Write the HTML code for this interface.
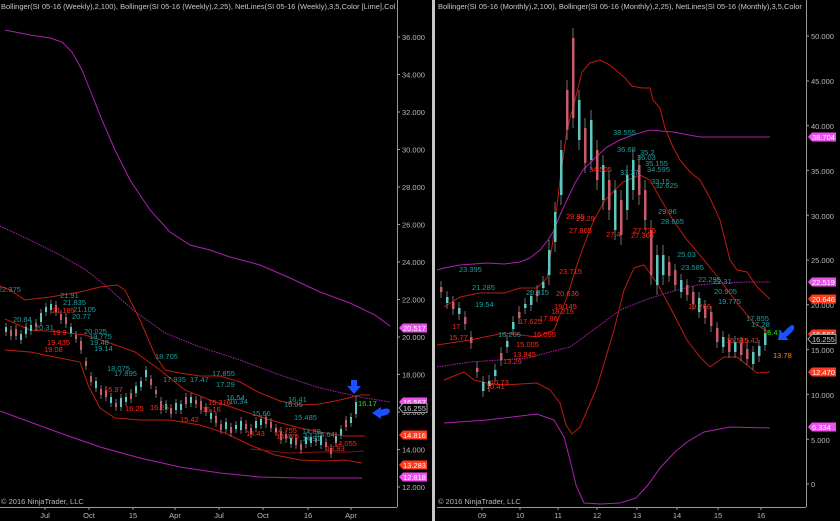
<!DOCTYPE html>
<html><head><meta charset="utf-8"><style>
html,body{margin:0;padding:0;background:#000;width:840px;height:521px;overflow:hidden}
svg{display:block}
text{font-family:"Liberation Sans",Arial,sans-serif}
.ax{font-size:7.5px;fill:#b8b8b8}
.h{font-size:7.5px;fill:#c8c8c8}
.t{font-size:7.5px;fill:#1f9e9e}
.r{font-size:7.5px;fill:#ff2a18}
.g{font-size:7.5px;fill:#22e022}
.o{font-size:7.5px;fill:#ff8c00}
.bx{font-size:7.5px;fill:#fff}
</style></head><body>
<svg width="840" height="521" viewBox="0 0 840 521" xmlns="http://www.w3.org/2000/svg">
<rect width="840" height="521" fill="#000"/>
<rect x="432" y="0" width="3" height="521" fill="#c8c8c8"/>
<line x1="397.5" y1="12" x2="397.5" y2="507" stroke="#9a9a9a"/>
<line x1="0" y1="507.5" x2="397" y2="507.5" stroke="#9a9a9a"/>
<line x1="806.5" y1="12" x2="806.5" y2="507" stroke="#9a9a9a"/>
<line x1="437" y1="507.5" x2="806" y2="507.5" stroke="#9a9a9a"/>

<text class="h" x="1" y="9">Bollinger(SI 05-16 (Weekly),2,100), Bollinger(SI 05-16 (Weekly),2,25), NetLines(SI 05-16 (Weekly),3,5,Color [Lime],Col</text>
<text class="h" x="438" y="9">Bollinger(SI 05-16 (Monthly),2,100), Bollinger(SI 05-16 (Monthly),2,25), NetLines(SI 05-16 (Monthly),3,5,Color</text>
<rect x="397" y="0" width="35" height="12" fill="#000"/>
<rect x="806" y="0" width="34" height="12" fill="#000"/>
<line x1="397.5" y1="0" x2="397.5" y2="12" stroke="#9a9a9a"/>
<line x1="806.5" y1="0" x2="806.5" y2="12" stroke="#9a9a9a"/>

<!-- ticks -->
<path stroke="#9a9a9a" fill="none" d="M397 37h3M397 74.5h3M397 112h3M397 149.5h3M397 187h3M397 224.5h3M397 262h3M397 299.5h3M397 337h3M397 374.5h3M397 412h3M397 449.5h3M397 487h3
M806 36h3M806 81h3M806 125.6h3M806 170.4h3M806 215.2h3M806 260h3M806 304.8h3M806 349.6h3M806 394.4h3M806 439.2h3M806 484h3
M45 507v3M89 507v3M133 507v3M175 507v3M219 507v3M263 507v3M308 507v3M351 507v3M482 507v3M520 507v3M558 507v3M597 507v3M637 507v3M677 507v3M718 507v3M761 507v3"/>

<!-- left panel lines -->
<g fill="none" stroke-width="1">
<polyline stroke="#b020b0" points="5,30 30,35 50,38 62,42 72,52 82,70 92,95 102,120 115,150 130,180 150,210 170,232 190,245 210,250 230,257 260,265 290,278 320,292 350,303 375,315 390,326"/>
<polyline stroke="#b020b0" stroke-dasharray="1.5,1" points="0,226 30,240 60,255 86,270 105,285 133,310 165,333 200,347 240,360 280,375 320,388 360,397 390,402"/>
<polyline stroke="#b020b0" points="0,411 30,422 60,433 100,447 140,458 180,467 220,473 260,477 300,478 330,478 362,478"/>
<polyline stroke="#c01a10" points="0,286 10,290 25,300 50,297 80,292 100,287 117,285 125,290 140,320 155,355 165,370 180,373 200,376 220,376 240,382 260,393 280,401 300,405 320,404 340,400 360,395 370,395"/>
<polyline stroke="#c01a10" points="5,319 30,330 60,332 85,335 110,343 135,352 160,370 185,390 210,400 240,410 270,420 300,428 325,433 345,436 365,436"/>
<polyline stroke="#c01a10" points="5,350 30,352 60,358 80,362 88,385 100,408 115,418 140,420 170,420 200,425 225,433 250,445 275,455 300,460 325,461 345,460 362,463"/>
<polyline stroke="#8a1008" points="250,449 290,453 320,452 350,452 364,451"/>
</g>

<!-- right panel lines -->
<g fill="none" stroke-width="1">
<polyline stroke="#b020b0" points="437,270 444,268 460,265 487,263 504,264 520,262 530,258 540,250 548,240 553,232 560,215 567,200 575,183 583,170 595,158 607,147 620,140 633,135 650,130 673,132 700,137 730,137 770,137"/>
<polyline stroke="#b020b0" stroke-dasharray="1.5,1" points="437,367 470,362 500,360 527,358 550,352 570,347 600,325 620,310 645,300 670,292 697,285 720,283 745,282 770,282"/>
<polyline stroke="#b020b0" points="444,423 487,420 537,414 554,420 564,437 570,460 576,485 584,503 600,504 620,503 636,498 648,485 660,468 675,452 687,442 704,432 730,427 770,428"/>
<polyline stroke="#c01a10" points="444,307 460,297 480,293 504,293 520,288 537,288 547,278 553,240 560,180 567,130 575,100 582,72 590,63 600,60 610,65 625,78 632,86 642,88 650,88 653,100 660,108 665,128 672,145 680,160 690,172 700,180 710,198 720,220 730,260 737,270 747,272 757,287 770,299"/>
<polyline stroke="#c01a10" points="437,345 470,340 504,333 537,337 554,330 567,297 577,265 584,245 594,220 605,200 623,182 640,175 650,180 660,198 673,220 687,240 704,260 720,280 737,303 754,323 770,333"/>
<polyline stroke="#c01a10" points="444,380 464,372 474,380 487,383 504,385 537,383 550,390 560,403 566,425 572,434 580,427 597,387 614,330 624,290 634,268 644,265 657,283 670,307 687,340 700,357 710,367 724,357 737,357 757,373 770,372"/>
</g>

<!-- left candles -->
<path fill="none" stroke="#8a8a8a" stroke-width="0.8" d="M6 323V336M11 326V340M16 325V340M21 330V344M26 323V338M31 321V335M36 319V331M41 309V326M46 303V316M51 300V314M56 301V316M61 310V324M66 313V328M71 323V337M76 331V343M81 337V354M86 357V370M91 372V386M96 377V392M101 385V399M106 386V401M111 393V407M116 399V411M121 394V411M126 393V406M131 389V403M136 382V397M141 377V391M146 366V381M151 375V389M156 386V398M161 397V414M166 400V413M171 404V418M176 399V414M181 400V414M186 393V408M191 393V407M196 396V408M201 397V414M206 403V416M211 409V423M216 412V427M221 420V434M226 418V433M231 423V437M236 421V433M241 417V434M246 420V433M251 424V438M256 417V432M261 415V429M266 413V428M271 418V432M276 424V436M281 427V444M286 430V443M291 434V448M296 434V449M301 440V454M306 433V448M311 433V447M316 434V446M321 432V449M326 438V451M331 444V458M336 432V447M341 425V439M346 416V431M351 413V427M356 396V418"/>
<path fill="#5ec8c0" d="M5 327h2v5h-2zM20 334h2v6h-2zM25 327h2v7h-2zM30 325h2v6h-2zM40 313h2v9h-2zM45 307h2v5h-2zM50 304h2v6h-2zM70 327h2v6h-2zM95 381h2v7h-2zM110 397h2v6h-2zM120 398h2v9h-2zM125 397h2v5h-2zM135 386h2v7h-2zM140 381h2v6h-2zM145 370h2v7h-2zM165 404h2v5h-2zM175 403h2v7h-2zM180 404h2v6h-2zM190 397h2v6h-2zM210 413h2v6h-2zM225 422h2v7h-2zM235 425h2v4h-2zM240 421h2v9h-2zM255 421h2v7h-2zM260 419h2v6h-2zM275 428h2v4h-2zM290 438h2v6h-2zM305 437h2v7h-2zM310 437h2v6h-2zM320 436h2v9h-2zM335 436h2v7h-2zM340 429h2v6h-2zM350 417h2v6h-2zM355 402h2v12h-2z"/>
<path fill="#c85a6a" d="M10 330h2v6h-2zM15 329h2v7h-2zM35 323h2v4h-2zM55 305h2v7h-2zM60 314h2v6h-2zM65 317h2v7h-2zM75 335h2v4h-2zM80 341h2v9h-2zM85 361h2v5h-2zM90 376h2v6h-2zM100 389h2v6h-2zM105 390h2v7h-2zM115 403h2v4h-2zM130 393h2v6h-2zM150 379h2v6h-2zM155 390h2v4h-2zM160 401h2v9h-2zM170 408h2v6h-2zM185 397h2v7h-2zM195 400h2v4h-2zM200 401h2v9h-2zM205 407h2v5h-2zM215 416h2v7h-2zM220 424h2v6h-2zM230 427h2v6h-2zM245 424h2v5h-2zM250 428h2v6h-2zM265 417h2v7h-2zM270 422h2v6h-2zM280 431h2v9h-2zM285 434h2v5h-2zM295 438h2v7h-2zM300 444h2v6h-2zM315 438h2v4h-2zM325 442h2v5h-2zM330 448h2v6h-2zM345 420h2v7h-2z"/>

<!-- right candles -->
<path fill="none" stroke="#8a8a8a" stroke-width="0.8" d="M441 281V298M447 291V309M453 296V315M459 302V320M465 311V330M471 331V349M477 362V378M483 376V397M489 375V392M495 364V382M501 347V366M507 335V353M513 316V335M519 306V324M525 298V314M531 290V311M537 285V302M543 276V294M549 240V285M555 202V252M561 140V205M567 80V140M573 28V128M579 90V150M585 118V173M591 110V170M597 140V190M603 155V210M609 170V220M615 180V240M621 190V245M627 165V220M633 150V200M639 155V205M645 180V230M651 220V285M657 245V295M663 245V285M669 256V282M675 264V291M681 274V298M687 279V301M693 286V310M699 292V318M705 300V324M711 306V332M717 322V348M723 331V353M729 334V358M735 336V358M741 337V361M747 343V365M753 346V370M759 340V362M765 327V351"/>
<path fill="#5ec8c0" d="M446 297h2.5v6h-2.5zM458 308h2.5v6h-2.5zM482 382h2.5v9h-2.5zM488 381h2.5v5h-2.5zM494 370h2.5v6h-2.5zM506 341h2.5v6h-2.5zM512 322h2.5v7h-2.5zM524 304h2.5v4h-2.5zM530 296h2.5v9h-2.5zM542 282h2.5v6h-2.5zM548 250h2.5v25h-2.5zM554 212h2.5v30h-2.5zM560 150h2.5v45h-2.5zM578 100h2.5v40h-2.5zM590 120h2.5v40h-2.5zM602 165h2.5v35h-2.5zM614 190h2.5v40h-2.5zM626 175h2.5v35h-2.5zM632 160h2.5v30h-2.5zM656 255h2.5v30h-2.5zM662 255h2.5v20h-2.5zM680 280h2.5v12h-2.5zM698 298h2.5v14h-2.5zM722 337h2.5v10h-2.5zM734 342h2.5v10h-2.5zM752 352h2.5v12h-2.5zM758 346h2.5v10h-2.5zM764 333h2.5v12h-2.5z"/>
<path fill="#c85a6a" d="M440 287h2.5v5h-2.5zM452 302h2.5v7h-2.5zM464 317h2.5v7h-2.5zM470 337h2.5v6h-2.5zM476 368h2.5v4h-2.5zM500 353h2.5v7h-2.5zM518 312h2.5v6h-2.5zM536 291h2.5v5h-2.5zM566 90h2.5v40h-2.5zM572 38h2.5v80h-2.5zM584 128h2.5v35h-2.5zM596 150h2.5v30h-2.5zM608 180h2.5v30h-2.5zM620 200h2.5v35h-2.5zM638 165h2.5v30h-2.5zM644 190h2.5v30h-2.5zM650 230h2.5v45h-2.5zM668 262h2.5v14h-2.5zM674 270h2.5v15h-2.5zM686 285h2.5v10h-2.5zM692 292h2.5v12h-2.5zM704 306h2.5v12h-2.5zM710 312h2.5v14h-2.5zM716 328h2.5v14h-2.5zM728 340h2.5v12h-2.5zM740 343h2.5v12h-2.5zM746 349h2.5v10h-2.5z"/>

<g>
<text class="t" x="-2" y="292">22.375</text>
<text class="t" x="60" y="298">21.91</text>
<text class="t" x="63" y="305">21.835</text>
<text class="t" x="73" y="312">21.105</text>
<text class="t" x="72" y="319">20.77</text>
<text class="t" x="13" y="322">20.84</text>
<text class="t" x="35" y="330">20.31</text>
<text class="t" x="84" y="334">20.025</text>
<text class="t" x="89" y="339">19.775</text>
<text class="t" x="90" y="345">19.48</text>
<text class="t" x="94" y="351">19.14</text>
<text class="t" x="155" y="359">18.705</text>
<text class="t" x="107" y="371">18.075</text>
<text class="t" x="114" y="376">17.895</text>
<text class="t" x="163" y="382">17.935</text>
<text class="t" x="212" y="376">17.855</text>
<text class="t" x="190" y="382">17.47</text>
<text class="t" x="216" y="387">17.29</text>
<text class="t" x="226" y="400">16.54</text>
<text class="t" x="229" y="404">16.34</text>
<text class="t" x="252" y="416">15.66</text>
<text class="t" x="288" y="402">16.41</text>
<text class="t" x="284" y="407">16.05</text>
<text class="t" x="294" y="420">15.485</text>
<text class="t" x="302" y="434">14.89</text>
<text class="t" x="302" y="441">14.91</text>
<text class="t" x="316" y="437">14.64</text>
<text class="r" x="52" y="313">21.185</text>
<text class="r" x="52" y="335">19.9</text>
<text class="r" x="47" y="345">19.435</text>
<text class="r" x="44" y="352">19.08</text>
<text class="r" x="104" y="392">16.97</text>
<text class="r" x="125" y="411">16.25</text>
<text class="r" x="150" y="410">16.25</text>
<text class="r" x="208" y="405">16.316</text>
<text class="r" x="202" y="412">16.16</text>
<text class="r" x="180" y="422">15.42</text>
<text class="r" x="246" y="436">14.43</text>
<text class="r" x="274" y="433">14.755</text>
<text class="r" x="276" y="439">14.475</text>
<text class="r" x="334" y="446">14.055</text>
<text class="r" x="326" y="451">13.83</text>
<text class="g" x="358" y="406">16.17</text>

<text class="t" x="459" y="272">23.395</text>
<text class="t" x="472" y="290">21.285</text>
<text class="t" x="475" y="307">19.54</text>
<text class="t" x="526" y="295">20.315</text>
<text class="t" x="498" y="337">16.205</text>
<text class="t" x="613" y="135">38.555</text>
<text class="t" x="617" y="152">36.68</text>
<text class="t" x="640" y="155">35.2</text>
<text class="t" x="637" y="160">36.03</text>
<text class="t" x="645" y="166">35.155</text>
<text class="t" x="647" y="172">34.595</text>
<text class="t" x="620" y="175">33.27</text>
<text class="t" x="651" y="184">33.15</text>
<text class="t" x="655" y="188">32.625</text>
<text class="t" x="658" y="214">29.96</text>
<text class="t" x="661" y="224">28.665</text>
<text class="t" x="677" y="257">25.03</text>
<text class="t" x="681" y="270">23.585</text>
<text class="t" x="698" y="282">22.295</text>
<text class="t" x="713" y="284">22.31</text>
<text class="t" x="714" y="294">20.905</text>
<text class="t" x="718" y="304">19.775</text>
<text class="t" x="746" y="321">17.855</text>
<text class="t" x="751" y="327">17.28</text>
<text class="r" x="589" y="172">34.505</text>
<text class="r" x="566" y="219">29.85</text>
<text class="r" x="576" y="221">29.29</text>
<text class="r" x="569" y="233">27.865</text>
<text class="r" x="606" y="237">27.4</text>
<text class="r" x="633" y="233">27.735</text>
<text class="r" x="631" y="238">27.305</text>
<text class="r" x="559" y="274">23.715</text>
<text class="r" x="556" y="296">20.636</text>
<text class="r" x="554" y="309">19.145</text>
<text class="r" x="551" y="314">18.215</text>
<text class="r" x="539" y="321">17.86</text>
<text class="r" x="519" y="324">17.625</text>
<text class="r" x="452" y="329">17</text>
<text class="r" x="449" y="340">15.77</text>
<text class="r" x="533" y="337">16.095</text>
<text class="r" x="516" y="347">15.005</text>
<text class="r" x="513" y="357">13.945</text>
<text class="r" x="503" y="364">13.29</text>
<text class="r" x="490" y="385">10.73</text>
<text class="r" x="486" y="389">10.41</text>
<text class="r" x="688" y="309">19.266</text>
<text class="r" x="726" y="343">15.515</text>
<text class="r" x="740" y="343">15.42</text>
<text class="g" x="763" y="335">16.41</text>
<text class="o" x="773" y="358">13.78</text>
</g>

<g class="ax">
<text x="402" y="40">36.000</text><text x="402" y="77.5">34.000</text><text x="402" y="115">32.000</text>
<text x="402" y="152.5">30.000</text><text x="402" y="190">28.000</text><text x="402" y="227.5">26.000</text>
<text x="402" y="265">24.000</text><text x="402" y="302.5">22.000</text><text x="402" y="340">20.000</text>
<text x="402" y="377.5">18.000</text><text x="402" y="415">16.000</text><text x="402" y="452.5">14.000</text>
<text x="402" y="490">12.000</text>
<text x="811" y="39">50.000</text><text x="811" y="84">45.000</text><text x="811" y="129">40.000</text>
<text x="811" y="174">35.000</text><text x="811" y="219">30.000</text><text x="811" y="263">25.000</text>
<text x="811" y="308">20.000</text><text x="811" y="353">15.000</text><text x="811" y="398">10.000</text>
<text x="811" y="443">5.000</text><text x="811" y="487">0</text>
</g>

<g>
<path d="M399,328 l4,-4.5 h24 v9 h-24 z" fill="#ee50ee"/><text class="bx" x="403" y="331">20.517</text>
<path d="M399,402 l4,-4.5 h24 v9 h-24 z" fill="#ee50ee"/><text class="bx" x="403" y="405">16.567</text>
<path d="M399,408 l4,-4.5 h24 v9 h-24 z" fill="#000" stroke="#9a9a9a"/><text class="ax" x="403" y="411" style="fill:#d0d0d0">16.255</text>
<path d="M399,435 l4,-4.5 h24 v9 h-24 z" fill="#ff3a1e"/><text class="bx" x="403" y="438">14.816</text>
<path d="M399,465 l4,-4.5 h24 v9 h-24 z" fill="#ff3a1e"/><text class="bx" x="403" y="468">13.283</text>
<path d="M399,477 l4,-4.5 h24 v9 h-24 z" fill="#ee50ee"/><text class="bx" x="403" y="480">12.818</text>
</g>
<g>
<path d="M808,137 l4,-4.5 h24 v9 h-24 z" fill="#ee50ee"/><text class="bx" x="812" y="140">38.704</text>
<path d="M808,282 l4,-4.5 h24 v9 h-24 z" fill="#ee50ee"/><text class="bx" x="812" y="285">22.519</text>
<path d="M808,299 l4,-4.5 h24 v9 h-24 z" fill="#ff3a1e"/><text class="bx" x="812" y="302">20.646</text>
<path d="M808,334 l4,-4.5 h24 v9 h-24 z" fill="#ff3a1e"/><text class="bx" x="812" y="337">16.561</text>
<path d="M808,339 l4,-4.5 h24 v9 h-24 z" fill="#000" stroke="#9a9a9a"/><text class="ax" x="812" y="342" style="fill:#d0d0d0">16.255</text>
<path d="M808,372 l4,-4.5 h24 v9 h-24 z" fill="#ff3a1e"/><text class="bx" x="812" y="375">12.470</text>
<path d="M808,427 l4,-4.5 h24 v9 h-24 z" fill="#ee50ee"/><text class="bx" x="812" y="430">6.334</text>
</g>

<g class="ax" text-anchor="middle">
<text x="45" y="518">Jul</text><text x="89" y="518">Oct</text><text x="133" y="518">15</text><text x="175" y="518">Apr</text>
<text x="219" y="518">Jul</text><text x="263" y="518">Oct</text><text x="308" y="518">16</text><text x="351" y="518">Apr</text>
<text x="482" y="518">09</text><text x="520" y="518">10</text><text x="558" y="518">11</text><text x="597" y="518">12</text>
<text x="637" y="518">13</text><text x="677" y="518">14</text><text x="718" y="518">15</text><text x="761" y="518">16</text>
</g>
<text class="ax" x="1" y="504">© 2016 NinjaTrader, LLC</text>
<text class="ax" x="438" y="504">© 2016 NinjaTrader, LLC</text>

<g fill="#1a50ff">
<path d="M351,380 h6 v6 h4 l-7,8 l-7,-8 h4 z"/>
<path d="M372,413 l9,-6 v3 q6,-3 9,0 q0,4 -4,5 q-3,1 -5,1 v3 z"/>
<path d="M778,340 l2,-10 l3,3 q5,-6 9,-8 q3,0 2,4 q-2,4 -8,8 l3,3 z"/>
</g>
</svg>
</body></html>
